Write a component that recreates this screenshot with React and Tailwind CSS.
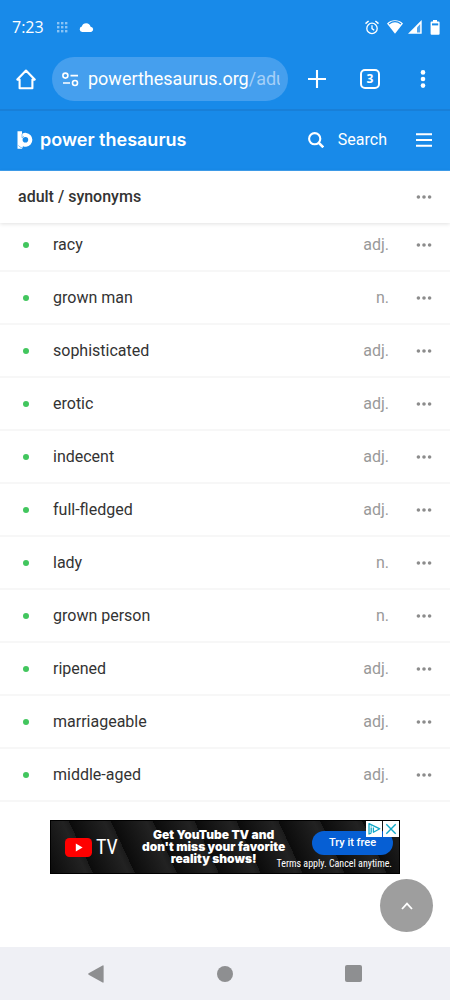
import React from 'react';

const words = [
  { word: 'racy', pos: 'adj.' },
  { word: 'grown man', pos: 'n.' },
  { word: 'sophisticated', pos: 'adj.' },
  { word: 'erotic', pos: 'adj.' },
  { word: 'indecent', pos: 'adj.' },
  { word: 'full-fledged', pos: 'adj.' },
  { word: 'lady', pos: 'n.' },
  { word: 'grown person', pos: 'n.' },
  { word: 'ripened', pos: 'adj.' },
  { word: 'marriageable', pos: 'adj.' },
  { word: 'middle-aged', pos: 'adj.' },
];

const Dots = () => (
  <svg width="16" height="4" viewBox="0 0 16 4" fill="#8c8c8c">
    <circle cx="2.4" cy="2" r="1.8" />
    <circle cx="8" cy="2" r="1.8" />
    <circle cx="13.6" cy="2" r="1.8" />
  </svg>
);

const StatusBar = () => (
  <div className="flex h-[54px] items-center justify-between pl-3 pr-[10px]">
    <div className="flex items-center">
      <span className="w-[45px] font-['Open_Sans',sans-serif] text-base">7:23</span>
      <svg width="11" height="11" viewBox="0 0 11 11" fill="#8ac4f5">
        {[0, 4, 8].map((y) =>
          [0, 4, 8].map((x) => <rect key={`${x}-${y}`} x={x} y={y} width="2.4" height="2.4" />)
        )}
      </svg>
      <svg className="ml-[11px]" width="15" height="9" viewBox="0 0 15 9" fill="#fff">
        <path d="M3.2 9A2.8 2.8 0 0 1 2.8 3.5A4.6 4.6 0 0 1 11.6 3.7A2.7 2.7 0 0 1 12.2 9Z" />
      </svg>
    </div>
    <div className="flex items-center">
      <svg width="14" height="15" viewBox="0 0 14 15" fill="none" stroke="#fff" strokeWidth="1.3">
        <circle cx="7" cy="8.4" r="5.2" />
        <path d="M.5 3.6L3.6 1M13.5 3.6L10.4 1" strokeWidth="1.5" />
        <path d="M7 5.3V8.6L9.2 10.2" />
      </svg>
      <svg className="ml-2" width="16" height="14" viewBox="0 0 16 14">
        <path d="M0 3.4C4.5-.9 11.5-.9 16 3.4L8 13.8Z" fill="#fff" />
        <path d="M2 4C5.6 1.2 10.4 1.2 14 4" fill="none" stroke="#188ae9" strokeWidth="1.1" />
      </svg>
      <svg className="ml-[5px]" width="14" height="14" viewBox="0 0 14 14">
        <path d="M0 13.7L13.7 0V13.7Z" fill="#fff" />
        <path d="M9 7.5L12.2 4V12.5H9Z" fill="#4ea4ef" />
      </svg>
      <svg className="ml-2" width="10" height="15" viewBox="0 0 10 15">
        <path d="M3 0H7V1.5H8.6Q9.6 1.5 9.6 2.5V13.7Q9.6 14.7 8.6 14.7H1.6Q.6 14.7 .6 13.7V2.5Q.6 1.5 1.6 1.5H3Z" fill="#fff" />
        <rect x="2" y="3.4" width="6.2" height="2" fill="#188ae9" />
      </svg>
    </div>
  </div>
);

const BrowserBar = () => (
  <div className="flex h-[55px] items-center pb-[5px]">
    <button aria-label="Home" className="flex w-[52px] shrink-0 justify-center">
      <svg width="20" height="21" viewBox="0 0 20 21" fill="none" stroke="#fff" strokeWidth="2.1" strokeLinejoin="round" strokeLinecap="round">
        <path d="M1.3 10.6L10 1.5L18.7 10.6H16.4V19.3H3.6V10.6Z" />
      </svg>
    </button>
    <div className="flex h-[44px] min-w-0 flex-1 items-center rounded-full bg-[#459fee] pl-[10px] pr-2">
      <svg className="shrink-0" width="17" height="15" viewBox="0 0 17 15" fill="none" stroke="#fff" strokeWidth="1.6">
        <circle cx="3.4" cy="3.6" r="2.5" />
        <path d="M8.5 3.6H16M1 11H8" />
        <circle cx="13" cy="11" r="2.5" />
      </svg>
      <a href="#url" className="ml-[9px] min-w-0 flex-1 overflow-hidden whitespace-nowrap text-lg leading-6">
        powerthesaurus.org<span className="text-[#a5d0f7]">/adu</span>
      </a>
    </div>
    <div className="ml-[2px] grid w-[160px] shrink-0 grid-cols-3">
      <button aria-label="New tab" className="flex items-center justify-center">
        <svg width="18" height="18" viewBox="0 0 18 18" stroke="#fff" strokeWidth="2.1">
          <path d="M9 0V18M0 9H18" />
        </svg>
      </button>
      <button aria-label="Tabs" className="flex items-center justify-center">
        <span className="flex h-5 w-5 items-center justify-center rounded-[5px] border-2 border-white font-['Open_Sans',sans-serif] text-xs font-bold leading-none">3</span>
      </button>
      <button aria-label="Browser menu" className="flex items-center justify-center">
        <svg width="6" height="18" viewBox="0 0 6 18" fill="#fff">
          <circle cx="3" cy="2.4" r="2.3" />
          <circle cx="3" cy="9" r="2.3" />
          <circle cx="3" cy="15.6" r="2.3" />
        </svg>
      </button>
    </div>
  </div>
);

const SiteHeader = () => (
  <header className="flex h-[62px] items-center border-t-2 border-t-[#187fd8] border-b border-b-[#3f9fee] pb-[2px] pl-[17px]">
    <a href="#home" className="flex items-center">
      <svg width="16" height="18" viewBox="0 0 16 18">
        <path d="M.5 .3H5V3A6.1 6.1 0 0 1 9.2 1.9A7 7 0 0 1 9.2 15.8Q7.6 16 6 15.3L5 17.7H.5Z" fill="#fff" />
        <circle cx="8.4" cy="8.8" r="2.8" fill="#188ae9" />
        <path d="M5 3V6.8L7 5.2M1.4 14.4Q2.6 16.4 5 16.8" fill="none" stroke="#188ae9" strokeWidth=".5" />
      </svg>
      <span className="ml-[7px] font-['Inter',sans-serif] text-lg font-semibold leading-6">power thesaurus</span>
    </a>
    <button className="ml-auto flex items-center text-base leading-6">
      <svg className="mr-[14px]" width="16" height="16" viewBox="0 0 16 16" fill="none" stroke="#fff" strokeWidth="2.1">
        <circle cx="6.7" cy="6.7" r="5.6" />
        <path d="M10.8 10.8L15.3 15.3" strokeWidth="2.6" />
      </svg>
      Search
    </button>
    <button aria-label="Menu" className="ml-[10px] flex w-[53px] justify-center">
      <svg width="16" height="14" viewBox="0 0 16 14" stroke="#fff" strokeWidth="2">
        <path d="M0 1.2H16M0 7H16M0 12.8H16" />
      </svg>
    </button>
  </header>
);

const WordRow = ({ word, pos }) => (
  <li className="flex h-[53px] items-center border-b-2 border-[#f7f7f7] text-base leading-6">
    <span className="mr-px flex w-[52px] justify-center">
      <span className="h-[6px] w-[6px] rounded-full bg-[#42c65e]" />
    </span>
    <a href="#word" className="text-[#333]">{word}</a>
    <span className="ml-auto mr-2 text-[#999]">{pos}</span>
    <button aria-label={`More about ${word}`} className="flex h-full w-[53px] items-center justify-center">
      <Dots />
    </button>
  </li>
);

const AdBanner = () => (
  <div className="relative mx-auto mt-[18px] flex h-[54px] w-full max-w-[350px] items-center overflow-hidden border border-black bg-[repeating-linear-gradient(65deg,#0b0b0b_0px,#222_32px,#1b1b1b_38px)] pl-[14px] text-white">
    <svg width="27" height="19" viewBox="0 0 27 19">
      <rect width="27" height="19" rx="4.5" fill="#f00" />
      <path d="M10.8 5.5L17.6 9.5L10.8 13.5Z" fill="#fff" />
    </svg>
    <span className="ml-1 w-5 font-['Roboto_Condensed','Roboto',sans-serif] text-xl leading-5">TV</span>
    <p className="ml-[26px] whitespace-nowrap text-center font-['Inter',sans-serif] text-xs font-black leading-3">
      Get YouTube TV and
      <br />
      don't miss your favorite
      <br />
      reality shows!
    </p>
    <button className="absolute right-[6px] top-[10px] h-6 w-[81px] rounded-full bg-[#065fd4] text-[11px] font-medium">
      Try it free
    </button>
    <span className="absolute bottom-[2px] right-[7px] whitespace-nowrap font-['Roboto_Condensed','Roboto',sans-serif] text-[10px] leading-[14px]">
      Terms apply. Cancel anytime.
    </span>
    <div className="absolute right-0 top-0 flex gap-px">
      <button aria-label="Ad choices" className="flex h-4 w-4 items-center justify-center bg-white">
        <svg width="14" height="14" viewBox="0 0 14 14" fill="none" stroke="#12a9c8" strokeWidth="1.3" strokeLinejoin="round">
          <path d="M4.3 11.1L2 12V1.6L12.8 6.8L6.4 10.2V5.6" />
          <path d="M4.2 5.5V10.8M4.2 3.4V4.5" />
        </svg>
      </button>
      <button aria-label="Close ad" className="flex h-4 w-4 items-center justify-center bg-white">
        <svg width="12" height="12" viewBox="0 0 12 12" stroke="#12a9c8" strokeWidth="1.4">
          <path d="M1.3 1.3L10.7 10.7M10.7 1.3L1.3 10.7" />
        </svg>
      </button>
    </div>
  </div>
);

const SystemNav = () => (
  <nav className="grid h-[53px] grid-cols-3 items-center bg-[#eff0f5] px-8">
    <button aria-label="Back" className="flex justify-center">
      <svg width="16" height="18" viewBox="0 0 16 18" fill="#8e8f91">
        <path d="M.6 8.3L14.6 .4Q15.6 0 15.6 1V17Q15.6 18 14.6 17.6L.6 9.7Q-.1 9 .6 8.3Z" />
      </svg>
    </button>
    <button aria-label="Home screen" className="flex justify-center">
      <span className="h-4 w-4 rounded-full bg-[#8e8f91]" />
    </button>
    <button aria-label="Recent apps" className="flex justify-center">
      <span className="h-[17px] w-[17px] rounded-xs bg-[#8e8f91]" />
    </button>
  </nav>
);

const App = () => {
  return (
    <div className="flex min-h-screen flex-col bg-white font-['Roboto',sans-serif]">
      <div className="bg-[#188ae9] text-white">
        <StatusBar />
        <BrowserBar />
        <SiteHeader />
      </div>

      <main className="relative flex flex-1 flex-col">
        <div className="z-10 flex h-[52px] items-center bg-white pl-[18px] shadow-[0_1px_4px_rgba(0,0,0,0.12)]">
          <h1 className="text-base font-medium leading-6 text-[#333]">adult / synonyms</h1>
          <button aria-label="More" className="ml-auto flex h-full w-[53px] items-center justify-center">
            <Dots />
          </button>
        </div>

        {/* first row is scrolled slightly under the title bar */}
        <ul className="-mt-1">
          {words.map((item) => (
            <WordRow key={item.word} word={item.word} pos={item.pos} />
          ))}
        </ul>

        <AdBanner />

        <button aria-label="Back to top" className="absolute bottom-[15px] right-[17px] flex h-[53px] w-[53px] items-center justify-center rounded-full bg-[#9e9e9e]">
          <svg width="12" height="8" viewBox="0 0 12 8" fill="none" stroke="#fff" strokeWidth="1.8">
            <path d="M1 7L6 1.6L11 7" />
          </svg>
        </button>
      </main>

      <SystemNav />
    </div>
  );
};

export default App;
